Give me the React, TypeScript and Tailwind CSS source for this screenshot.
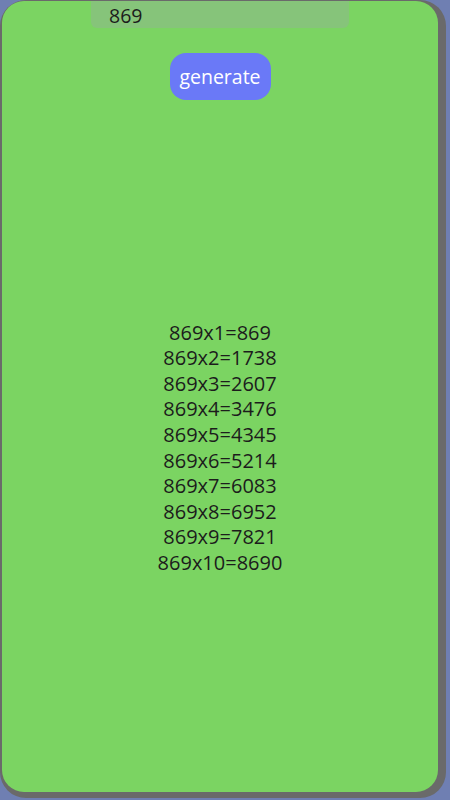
import React, { useState } from 'react';

export default function App() {
  const [num, setNum] = useState('869');
  const [rows, setRows] = useState<string[]>(() => buildRows('869'));

  function buildRows(v: string) {
    const n = parseInt(v, 10);
    if (isNaN(n)) return [];
    return Array.from({ length: 10 }, (_, i) => `${n}x${i + 1}=${n * (i + 1)}`);
  }

  return (
    <div className="w-[450px] h-[800px] bg-[#6f7fb2] overflow-hidden" style={{ fontFamily: '"Open Sans", "Noto Sans", sans-serif' }}>
      <div className="w-[446px] h-[798px] bg-[#6a6a6a] rounded-[26px] pl-[2px] pt-[1px] pr-[8px] pb-[6px] flex">
        <div className="flex-1 bg-[#7bd462] rounded-[22px] flex flex-col items-center overflow-hidden">
          <input
            value={num}
            onChange={(e) => setNum(e.target.value)}
            className="w-[258px] h-[27px] bg-[#86c47a] rounded-b-[6px] px-[18px] pt-[2px] text-[19.5px] text-[#1c1c1c] outline-none"
          />
          <button
            onClick={() => setRows(buildRows(num))}
            className="mt-[25px] w-[101px] h-[47px] bg-[#6a79f7] rounded-[16px] text-white text-[19.5px] leading-none"
          >
            generate
          </button>
          <div className="flex-1 flex flex-col justify-center items-center text-[#1c1c1c] text-[20px] leading-[25.6px] pt-[3px]">
            {rows.map((r) => (
              <div key={r}>{r}</div>
            ))}
          </div>
        </div>
      </div>
    </div>
  );
}
